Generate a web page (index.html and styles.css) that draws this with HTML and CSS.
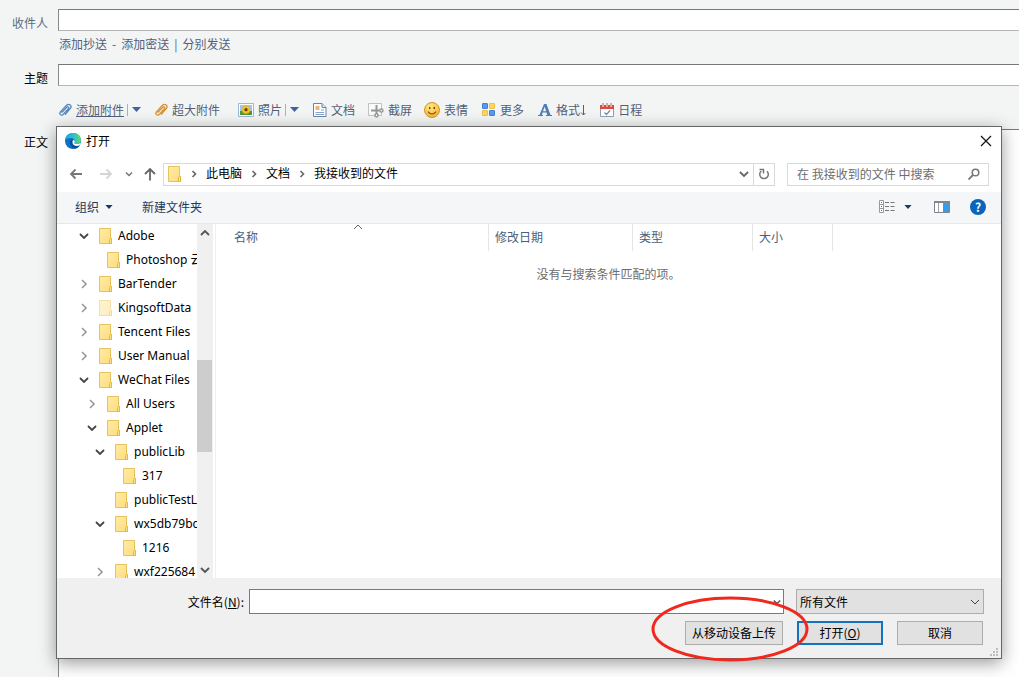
FILE: index.html
```html
<!DOCTYPE html>
<html lang="zh-CN">
<head>
<meta charset="utf-8">
<title>写信</title>
<link rel="stylesheet" href="styles.css">
</head>
<body>
<svg class="defs" aria-hidden="true">
  <defs>
    <linearGradient id="folderFill" x1="0" y1="0" x2="1" y2="1"><stop offset="0" stop-color="#ffeba6"/><stop offset="1" stop-color="#fddd7c"/></linearGradient>
    <linearGradient id="edgeTop" x1="0" y1="0" x2="1" y2="0"><stop offset="0" stop-color="#1ba3e0"/><stop offset=".55" stop-color="#2cc3c9"/><stop offset="1" stop-color="#66d95a"/></linearGradient>
    <radialGradient id="smile" cx=".4" cy=".3" r=".8"><stop offset="0" stop-color="#ffeb84"/><stop offset="1" stop-color="#f3b02c"/></radialGradient>
  </defs>
  <symbol id="folder" viewBox="0 0 14 16"><path d="M.5.5h11v10h1v5H.5z" fill="url(#folderFill)" stroke="#e6c35c"/><path d="M10.500 15.500v-4l1-1h1v5z" fill="#ffe694" stroke="#e0b640"/></symbol>
  <symbol id="right" viewBox="0 0 10 10"><path d="M3 1l4 4-4 4" fill="none" stroke="currentColor" stroke-width="1.600"/></symbol>
  <symbol id="small-right" viewBox="0 0 10 10"><path d="M3.500 2l3 3-3 3" fill="none" stroke="currentColor" stroke-width="1.600"/></symbol>
  <symbol id="down" viewBox="0 0 10 10"><path d="M1 3l4 4 4-4" fill="none" stroke="currentColor" stroke-width="1.800"/></symbol>
  <symbol id="triangle" viewBox="0 0 9 5"><path d="M0 0h9L4.500 5z" fill="currentColor"/></symbol>
  <symbol id="clip" viewBox="0 0 14 14"><path d="M4 9.300l4.700-5c1.300-1.200 2.800.2 1.700 1.500l-5.200 5.600c-2 1.800-4.500-.4-2.800-2.500l5.900-6.500c2.800-2.600 6.200.5 3.900 3.300l-4.900 5.600" fill="none" stroke="currentColor" stroke-width="1.300" stroke-linecap="round"/></symbol>
</svg>

<form class="compose">
  <label class="label muted" for="to">收件人</label>
  <input class="field" id="to" type="text">
  <div class="links"><a href="#">添加抄送</a><span>-</span><a href="#">添加密送</a><span>|</span><a href="#">分别发送</a></div>
  <label class="label" for="subject">主题</label>
  <input class="field" id="subject" type="text">
  <div class="tools">
    <a class="tool attach" href="#"><svg class="i14 blue"><use href="#clip"/></svg><u>添加附件</u></a>
    <button class="drop" type="button" aria-label="附件选项"><svg class="tri"><use href="#triangle"/></svg></button>
    <a class="tool big" href="#"><svg class="i14 orange"><use href="#clip"/></svg>超大附件</a>
    <a class="tool photo" href="#"><svg class="i16" viewBox="0 0 16 14"><path d="M.5.5h15v13H.5z" fill="#fff" stroke="#9db9d5"/><path d="M2 2h12v10H2z" fill="#9bcbe8"/><path d="M2 8h12v4H2z" fill="#4c963d"/><g fill="#f7c82c" stroke="#dca318" stroke-width=".4"><circle cx="8" cy="4.200" r="1.700"/><circle cx="8" cy="9.200" r="1.700"/><circle cx="5.400" cy="6.700" r="1.700"/><circle cx="10.600" cy="6.700" r="1.700"/><circle cx="6.100" cy="5" r="1.600"/><circle cx="9.900" cy="5" r="1.600"/><circle cx="6.100" cy="8.500" r="1.600"/><circle cx="9.900" cy="8.500" r="1.600"/></g><circle cx="8" cy="6.700" r="1.600" fill="#6b3c10"/></svg>照片</a>
    <button class="drop" type="button" aria-label="照片选项"><svg class="tri"><use href="#triangle"/></svg></button>
    <a class="tool doc" href="#"><svg class="i14" viewBox="0 0 14 14"><path d="M.5.5h8.500l4 4v9H.5z" fill="#fff" stroke="#6685ad"/><path d="M9 .5v4h4" fill="#d9e5f2" stroke="#6685ad"/><path d="M2.500 3h4v4h-4z" fill="#f0b27c"/><path d="M8 7h3M2.500 9.500h8.500M2.500 11.500h8.500" stroke="#86a3c9"/></svg>文档</a>
    <a class="tool shot" href="#"><svg class="i16" viewBox="0 0 16 16"><path d="M.5 1.500h13v12H.5z" fill="#fafafa" stroke="#bfc1c3"/><path d="M8.500 3v8M3 8.500h8" stroke="#919598" stroke-width="2"/><circle cx="13.300" cy="8.500" r="1.600" fill="#fff" stroke="#919598" stroke-width="1.500"/><circle cx="8.500" cy="13.300" r="1.600" fill="#fff" stroke="#919598" stroke-width="1.500"/></svg>截屏</a>
    <a class="tool face" href="#"><svg class="i16" viewBox="0 0 16 16"><circle cx="8" cy="8" r="7.500" fill="url(#smile)" stroke="#d99422"/><ellipse cx="5.800" cy="6" rx=".8" ry="1.300" fill="#70430d"/><ellipse cx="10.200" cy="6" rx=".8" ry="1.300" fill="#70430d"/><path d="M4 9.500c1.500 3.300 6.500 3.300 8 0" fill="none" stroke="#895611" stroke-width="1.100"/></svg>表情</a>
    <a class="tool more" href="#"><svg class="i14" viewBox="0 0 14 14"><rect x=".5" y=".5" width="5" height="5" rx=".5" fill="#5b9bec" stroke="#3f80d5"/><rect x="7.500" y=".5" width="5" height="5" rx=".5" fill="#ffd766" stroke="#efbf44"/><rect x=".5" y="7.500" width="5" height="5" rx=".5" fill="#ffd766" stroke="#efbf44"/><rect x="7.500" y="7.500" width="5" height="5" rx=".5" fill="#5b9bec" stroke="#3f80d5"/></svg>更多</a>
    <a class="tool format" href="#"><svg class="i14" viewBox="0 0 14 14"><path d="M6 1h2.500l4 11H14v1H8v-1h1.300l-.8-2.500H4.700L3.800 12H5v1H0v-1h1.500zM5 8.300h3.200L6.600 3.700z" fill="#4c7eb9"/></svg>格式<svg class="thin" viewBox="0 0 6 12"><path d="M3.500 1v10M1 8.500L3.500 11l2-2" fill="none" stroke="currentColor"/></svg></a>
    <a class="tool date" href="#"><svg class="i14" viewBox="0 0 14 14"><path d="M.5 2.500h13v11H.5z" fill="#fff" stroke="#8ba1ba"/><path d="M0 2h14v4H0z" fill="#d94a45"/><path d="M3 0v3.500M7 0v3.500M11 0v3.500" stroke="#fff" stroke-width="2"/><path d="M3 0v3M7 0v3M11 0v3" stroke="#a95a5a"/><path d="M4.500 9.500l2 2 3.500-4" fill="none" stroke="#7c8793" stroke-width="1.200"/></svg>日程</a>
  </div>
  <label class="label body-label" for="content">正文</label>
  <textarea class="content" id="content"></textarea>
</form>

<section class="dialog" role="dialog" aria-labelledby="dialog-title">
  <header class="titlebar">
    <svg class="edge" viewBox="0 0 16 16"><circle cx="8" cy="8" r="8" fill="#0c72c4"/><path d="M0 7C.8 2.600 4 0 8 0c4.800 0 8 3.300 8 6.800 0 2.700-2 4.200-4.400 4.200-1.800 0-2.800-.7-2-1.600C10.600 7.500 9 5 5.800 5 3 5 1 6 0 7z" fill="url(#edgeTop)"/><path d="M5.400 7.500C3.500 11 7 15.500 10.500 15.600c2-.6 3.500-1.800 4.500-3.400-4.500 2-8.500-.5-7.800-3.700.3-1 .8-1.500 1.200-1.700-1.200-.2-2.300 0-3 .7z" fill="#0b4c98"/><path d="M8 7c2 0 2 1.800 1.500 2.500-.6 1 .6 1.700 2.100 1.600 1.500 0 2.900-.5 4-1.400-.2 1.200-.7 2-1.200 2.600C11.500 14 6 12.500 8 7z" fill="#fff"/></svg>
    <h1 id="dialog-title">打开</h1>
    <button class="plain" type="button" aria-label="关闭"><svg class="close" viewBox="0 0 12 12"><path d="M1 1l10 10M11 1L1 11" stroke="#111" stroke-width="1.200"/></svg></button>
  </header>

  <nav class="navbar">
    <button class="plain" type="button" aria-label="后退"><svg class="i14" viewBox="0 0 14 14"><path d="M13 7H2M6.500 2.500L2 7l4.500 4.500" fill="none" stroke="#777" stroke-width="1.800"/></svg></button>
    <button class="plain forward" type="button" aria-label="前进"><svg class="i14" viewBox="0 0 14 14"><path d="M1 7h11M7.500 2.500L12 7l-4.500 4.500" fill="none" stroke="#d5d5d5" stroke-width="1.800"/></svg></button>
    <button class="plain recent" type="button" aria-label="最近位置"><svg class="i8" viewBox="0 0 8 8"><path d="M1 2.500l3 3 3-3" fill="none" stroke="#777" stroke-width="1.500"/></svg></button>
    <button class="plain up" type="button" aria-label="上移"><svg class="i14" viewBox="0 0 14 14"><path d="M7 13.500V2M2 7l5-5 5 5" fill="none" stroke="#666" stroke-width="1.800"/></svg></button>
    <div class="address">
      <svg class="folder"><use href="#folder"/></svg>
      <svg class="i10 sep"><use href="#small-right"/></svg><button class="plain" type="button">此电脑</button>
      <svg class="i10 sep"><use href="#small-right"/></svg><button class="plain" type="button">文档</button>
      <svg class="i10 sep"><use href="#small-right"/></svg><button class="plain" type="button">我接收到的文件</button>
      <button class="plain history" type="button" aria-label="以前的位置"><svg class="i10"><use href="#down"/></svg></button>
      <button class="plain refresh" type="button" aria-label="刷新"><svg class="i12" viewBox="0 0 12 12"><path d="M9 3.200A4.300 4.300 0 1 1 3.300 3" fill="none" stroke="#777" stroke-width="1.500"/><path d="M1.500 1.500h4v4" fill="none" stroke="#777" stroke-width="1.500"/></svg></button>
    </div>
    <div class="search">
      <input type="search" aria-label="搜索" placeholder="在 我接收到的文件 中搜索">
      <svg class="i12" viewBox="0 0 12 12"><circle cx="7.500" cy="4.500" r="3.300" fill="none" stroke="#777" stroke-width="1.500"/><path d="M5 7l-4.500 4.500" stroke="#777" stroke-width="1.800"/></svg>
    </div>
  </nav>

  <div class="commands">
    <button class="plain" type="button">组织<svg class="small-tri"><use href="#triangle"/></svg></button>
    <button class="plain new" type="button">新建文件夹</button>
    <button class="plain view" type="button" aria-label="更改视图"><svg class="i16" viewBox="0 0 16 14"><path d="M.5.5h4v12h-4zM.5 4.500h4M.5 8.500h4" fill="#fff" stroke="#929aa3"/><path d="M2 2.500h1M2 6.500h1M2 10.500h1" stroke="#667"/><path d="M6 2.500h4M11.500 2.500h4M6 6.500h4M11.500 6.500h4M6 10.500h4M11.500 10.500h4" stroke="#777"/></svg><svg class="small-tri"><use href="#triangle"/></svg></button>
    <button class="plain preview" type="button" aria-label="预览窗格"><svg class="i16" viewBox="0 0 16 12"><path d="M.5.5h15v11H.5z" fill="#fff" stroke="#7d858e"/><path d="M0 0h16v2H0z" fill="#7d858e"/><path d="M4.500 2v9" stroke="#9ba2a8"/><path d="M9 2h6v9H9z" fill="#3d9be3"/></svg></button>
    <button class="plain help" type="button" aria-label="帮助">?</button>
  </div>

  <div class="browser">
    <ul class="tree">
      <li><svg class="i10 open"><use href="#down"/></svg><svg class="folder"><use href="#folder"/></svg>Adobe</li>
      <li class="l1"><i class="i10"></i><svg class="folder"><use href="#folder"/></svg>Photoshop 云</li>
      <li><svg class="i10 shut"><use href="#right"/></svg><svg class="folder"><use href="#folder"/></svg>BarTender</li>
      <li><svg class="i10 shut"><use href="#right"/></svg><svg class="folder faded"><use href="#folder"/></svg>KingsoftData</li>
      <li><svg class="i10 shut"><use href="#right"/></svg><svg class="folder"><use href="#folder"/></svg>Tencent Files</li>
      <li><svg class="i10 shut"><use href="#right"/></svg><svg class="folder"><use href="#folder"/></svg>User Manual</li>
      <li><svg class="i10 open"><use href="#down"/></svg><svg class="folder"><use href="#folder"/></svg>WeChat Files</li>
      <li class="l1"><svg class="i10 shut"><use href="#right"/></svg><svg class="folder"><use href="#folder"/></svg>All Users</li>
      <li class="l1"><svg class="i10 open"><use href="#down"/></svg><svg class="folder"><use href="#folder"/></svg>Applet</li>
      <li class="l2"><svg class="i10 open"><use href="#down"/></svg><svg class="folder"><use href="#folder"/></svg>publicLib</li>
      <li class="l3"><i class="i10"></i><svg class="folder"><use href="#folder"/></svg>317</li>
      <li class="l2"><i class="i10"></i><svg class="folder"><use href="#folder"/></svg>publicTestL</li>
      <li class="l2"><svg class="i10 open"><use href="#down"/></svg><svg class="folder"><use href="#folder"/></svg>wx5db79bc</li>
      <li class="l3"><i class="i10"></i><svg class="folder"><use href="#folder"/></svg>1216</li>
      <li class="l2"><svg class="i10 shut"><use href="#right"/></svg><svg class="folder"><use href="#folder"/></svg>wxf225684</li>
    </ul>
    <div class="scrollbar">
      <svg class="i10 flip"><use href="#down"/></svg>
      <div class="track"><div class="thumb"></div></div>
      <svg class="i10"><use href="#down"/></svg>
    </div>
    <div class="files">
      <table>
        <thead><tr><th class="name">名称<svg class="sort" viewBox="0 0 10 6"><path d="M1 5l4-4 4 4" fill="none" stroke="#666"/></svg></th><th class="modified">修改日期</th><th class="type">类型</th><th class="size">大小</th><th class="rest"></th></tr></thead>
      </table>
      <p class="empty">没有与搜索条件匹配的项。</p>
    </div>
  </div>

  <footer class="footer">
    <div class="row">
      <label for="filename">文件名(<u>N</u>):</label>
      <div class="combo"><input id="filename" type="text"><svg class="i8"><use href="#down"/></svg></div>
      <div class="filter"><select aria-label="文件类型"><option>所有文件</option></select><svg class="i10" viewBox="0 0 10 10"><path d="M1 3l4 4 4-4" fill="none" stroke="#444"/></svg></div>
    </div>
    <div class="row actions">
      <div class="upload"><button class="btn" type="button">从移动设备上传</button><svg class="circle" viewBox="0 0 158 66"><ellipse cx="79" cy="33" rx="77" ry="31" fill="none" stroke="#f0281e" stroke-width="3"/></svg></div>
      <button class="btn primary" type="button">打开(<u>O</u>)</button>
      <button class="btn cancel" type="button">取消</button>
    </div>
    <svg class="grip" viewBox="0 0 8 8"><path d="M6 0h2v2H6zM3 3h2v2H3zM6 3h2v2H6zM0 6h2v2H0zM3 6h2v2H3zM6 6h2v2H6z" fill="#bdbdbd"/></svg>
  </footer>
</section>
</body>
</html>
```
FILE: styles.css
```css
* { box-sizing: border-box; }
body {
  margin: 0;
  height: 100vh;
  overflow: hidden;
  position: relative;
  background: #f3f5f5;
  color: #000;
  font: 12px/20px "Noto Sans CJK SC", sans-serif;
}
input, button, select, textarea { font: inherit; color: inherit; margin: 0; }
svg { display: block; flex: none; }
.defs { position: absolute; width: 0; height: 0; }
.i8 { width: 8px; height: 8px; }
.i10 { width: 10px; height: 10px; flex: none; }
.i12 { width: 12px; height: 12px; }
.i14 { width: 14px; height: 14px; }
.i16 { width: 16px; height: 16px; }
.folder { width: 14px; height: 16px; }
.faded { opacity: 0.5; }

/* Compose form */
.compose {
  display: grid;
  grid-template-columns: 48px minmax(0, 1fr);
  grid-template-rows: 22px 33px 22px 43px minmax(0, 1fr);
  column-gap: 10px;
  height: 100%;
  padding-top: 9px;
}
.label { text-align: right; padding-top: 4px; white-space: nowrap; }
.muted { color: #5f6b7c; }
.body-label { padding-top: 3px; }
.field, .content {
  width: 100%;
  border: 1px solid #b5b5b5;
  border-top-color: #777;
  border-left-color: #888;
  border-right: 0;
  background: #fff;
}
.content { height: 100%; border-bottom: 0; resize: none; }
.links, .tools { grid-column: 2; color: #516079; }
.links { display: flex; gap: 5px; padding: 3px 0 0 1px; }
.links a, .tool { color: inherit; text-decoration: none; }
.tools { display: flex; align-items: center; padding-top: 4px; white-space: nowrap; }
.tool { display: flex; align-items: center; gap: 4px; }
.blue { color: #5586bd; }
.orange { color: #d9902f; }
.drop {
  display: flex;
  align-items: center;
  height: 12px;
  margin-left: 3px;
  padding: 0 0 0 4px;
  border: 0;
  border-left: 1px solid #aab0b8;
  background: none;
  color: #3a62a6;
}
.tri { width: 9px; height: 5px; }
.big { margin-left: 13px; }
.photo { margin-left: 18px; }
.doc { margin-left: 14px; }
.shot { margin-left: 13px; }
.face { margin-left: 12px; }
.more, .format, .date { margin-left: 14px; }
.thin { width: 6px; height: 12px; margin-left: -4px; }

/* File dialog */
.dialog {
  position: absolute;
  top: 126px;
  right: 17px;
  bottom: 18px;
  left: 56px;
  display: flex;
  flex-direction: column;
  border: 1px solid #666;
  background: #fff;
  box-shadow: 0 4px 16px rgba(0, 0, 0, 0.4);
}
.plain {
  display: flex;
  align-items: center;
  padding: 0;
  border: 0;
  background: none;
  white-space: nowrap;
}
.titlebar { display: flex; align-items: center; height: 29px; padding: 0 9px 2px 8px; }
.titlebar h1 { flex: 1; margin: 0 0 0 5px; font-size: 12px; font-weight: 400; }
.edge { width: 16px; height: 16px; }
.close { width: 12px; height: 12px; }

.navbar { display: flex; align-items: center; height: 36px; padding: 0 12px; color: #666; }
.forward { margin-left: 16px; }
.recent { margin-left: 12px; }
.up { margin-left: 10px; }
.address, .search { display: flex; align-items: center; height: 23px; border: 1px solid #d9d9d9; }
.address { flex: 1; min-width: 0; margin-left: 6px; padding: 0 0 0 4px; color: #000; }
.address .plain { line-height: 20px; padding-bottom: 2px; }
.sep { margin: 0 7px; color: #666; }
.address .history { margin-left: auto; padding: 0; color: #666; }
.address .refresh { align-self: stretch; margin-left: 4px; padding: 0 4px; border-left: 1px solid #d9d9d9; }
.search { width: 202px; margin-left: 12px; padding: 0 8px; }
.search input { flex: 1; min-width: 0; padding: 0 0 0 1px; border: 0; background: none; outline: 0; }
.search input::placeholder { color: #6d6d6d; opacity: 1; }

.commands {
  display: flex;
  align-items: center;
  height: 32px;
  padding: 0 15px 2px 18px;
  border-bottom: 1px solid #e5e8eb;
  background: #f4f6f8;
  color: #1e395b;
}
.small-tri { width: 8px; height: 4px; margin-left: 6px; }
.new { margin-left: 29px; }
.view { margin-left: auto; }
.view .small-tri { margin-left: 9px; }
.preview { margin-left: 22px; }
.help {
  justify-content: center;
  width: 16px;
  height: 16px;
  margin-left: 20px;
  border-radius: 50%;
  background: #0a63bd;
  color: #fff;
  font-weight: 700;
}

.browser { display: flex; flex: 1; min-height: 0; }
.tree {
  width: 140px;
  margin: 0;
  padding: 0;
  overflow: hidden;
  list-style: none;
  font-family: "Noto Sans", "Noto Sans CJK SC", sans-serif;
  line-height: 22px;
}
.tree li { display: flex; align-items: center; height: 24px; padding-left: 22px; white-space: nowrap; }
.tree .l1 { padding-left: 30px; }
.tree .l2 { padding-left: 38px; }
.tree .l3 { padding-left: 46px; }
.tree .folder { margin: 0 5px 0 10px; }
.open { color: #444; }
.shut { color: #999; }
.scrollbar {
  display: flex;
  flex-direction: column;
  align-items: center;
  width: 16px;
  padding: 4px 0 3px;
  background: #f0f0f0;
  color: #555;
}
.flip { transform: rotate(180deg); }
.track { flex: 1; width: 100%; padding-top: 122px; }
.thumb { width: 15px; height: 92px; background: #cdcdcd; }
.files { flex: 1; min-width: 0; margin-left: 2px; border-left: 1px solid #f0f0f0; }
.files table { width: 100%; padding-left: 12px; border-spacing: 0; table-layout: fixed; }
.files th {
  height: 27px;
  padding: 0 6px 2px;
  border-right: 1px solid #e5e5e5;
  color: #4c607a;
  font-weight: 400;
  text-align: left;
}
.files .name { position: relative; width: 261px; }
.modified { width: 144px; }
.type { width: 120px; }
.size { width: 80px; }
.files .rest { border: 0; }
.sort { position: absolute; top: 0; left: 50%; width: 10px; height: 6px; margin-left: -5px; }
.empty { margin: 13px 0 0; color: #6d6d6d; text-align: center; }

.footer { position: relative; padding: 11px 17px 13px; background: #f0f0f0; }
.row { display: flex; align-items: center; justify-content: flex-end; }
.row > label { width: 170px; text-align: right; }
.combo, .filter { position: relative; height: 25px; }
.combo { flex: 1; margin: 0 12px 0 5px; }
.combo input { width: 100%; height: 100%; border: 1px solid #7a7a7a; background: #fff; }
.combo svg { position: absolute; top: 9px; right: 3px; color: #555; }
.filter { width: 188px; }
.filter select {
  width: 100%;
  height: 100%;
  padding: 0 3px;
  border: 1px solid #adadad;
  border-radius: 0;
  background: #e1e1e1;
  appearance: none;
}
.filter svg { position: absolute; top: 8px; right: 4px; pointer-events: none; }
.actions { margin-top: 7px; padding-right: 1px; gap: 14px; }
.btn { width: 86px; height: 24px; padding: 0; border: 1px solid #adadad; background: #e1e1e1; line-height: 20px; }
.primary { border: 2px solid #1473bf; line-height: 18px; }
.upload { position: relative; }
.upload .btn { width: 98px; }
.circle { position: absolute; z-index: 1; top: -25px; left: -34px; width: 158px; height: 66px; pointer-events: none; }
.grip { position: absolute; right: 3px; bottom: 2px; width: 8px; height: 8px; }
```
